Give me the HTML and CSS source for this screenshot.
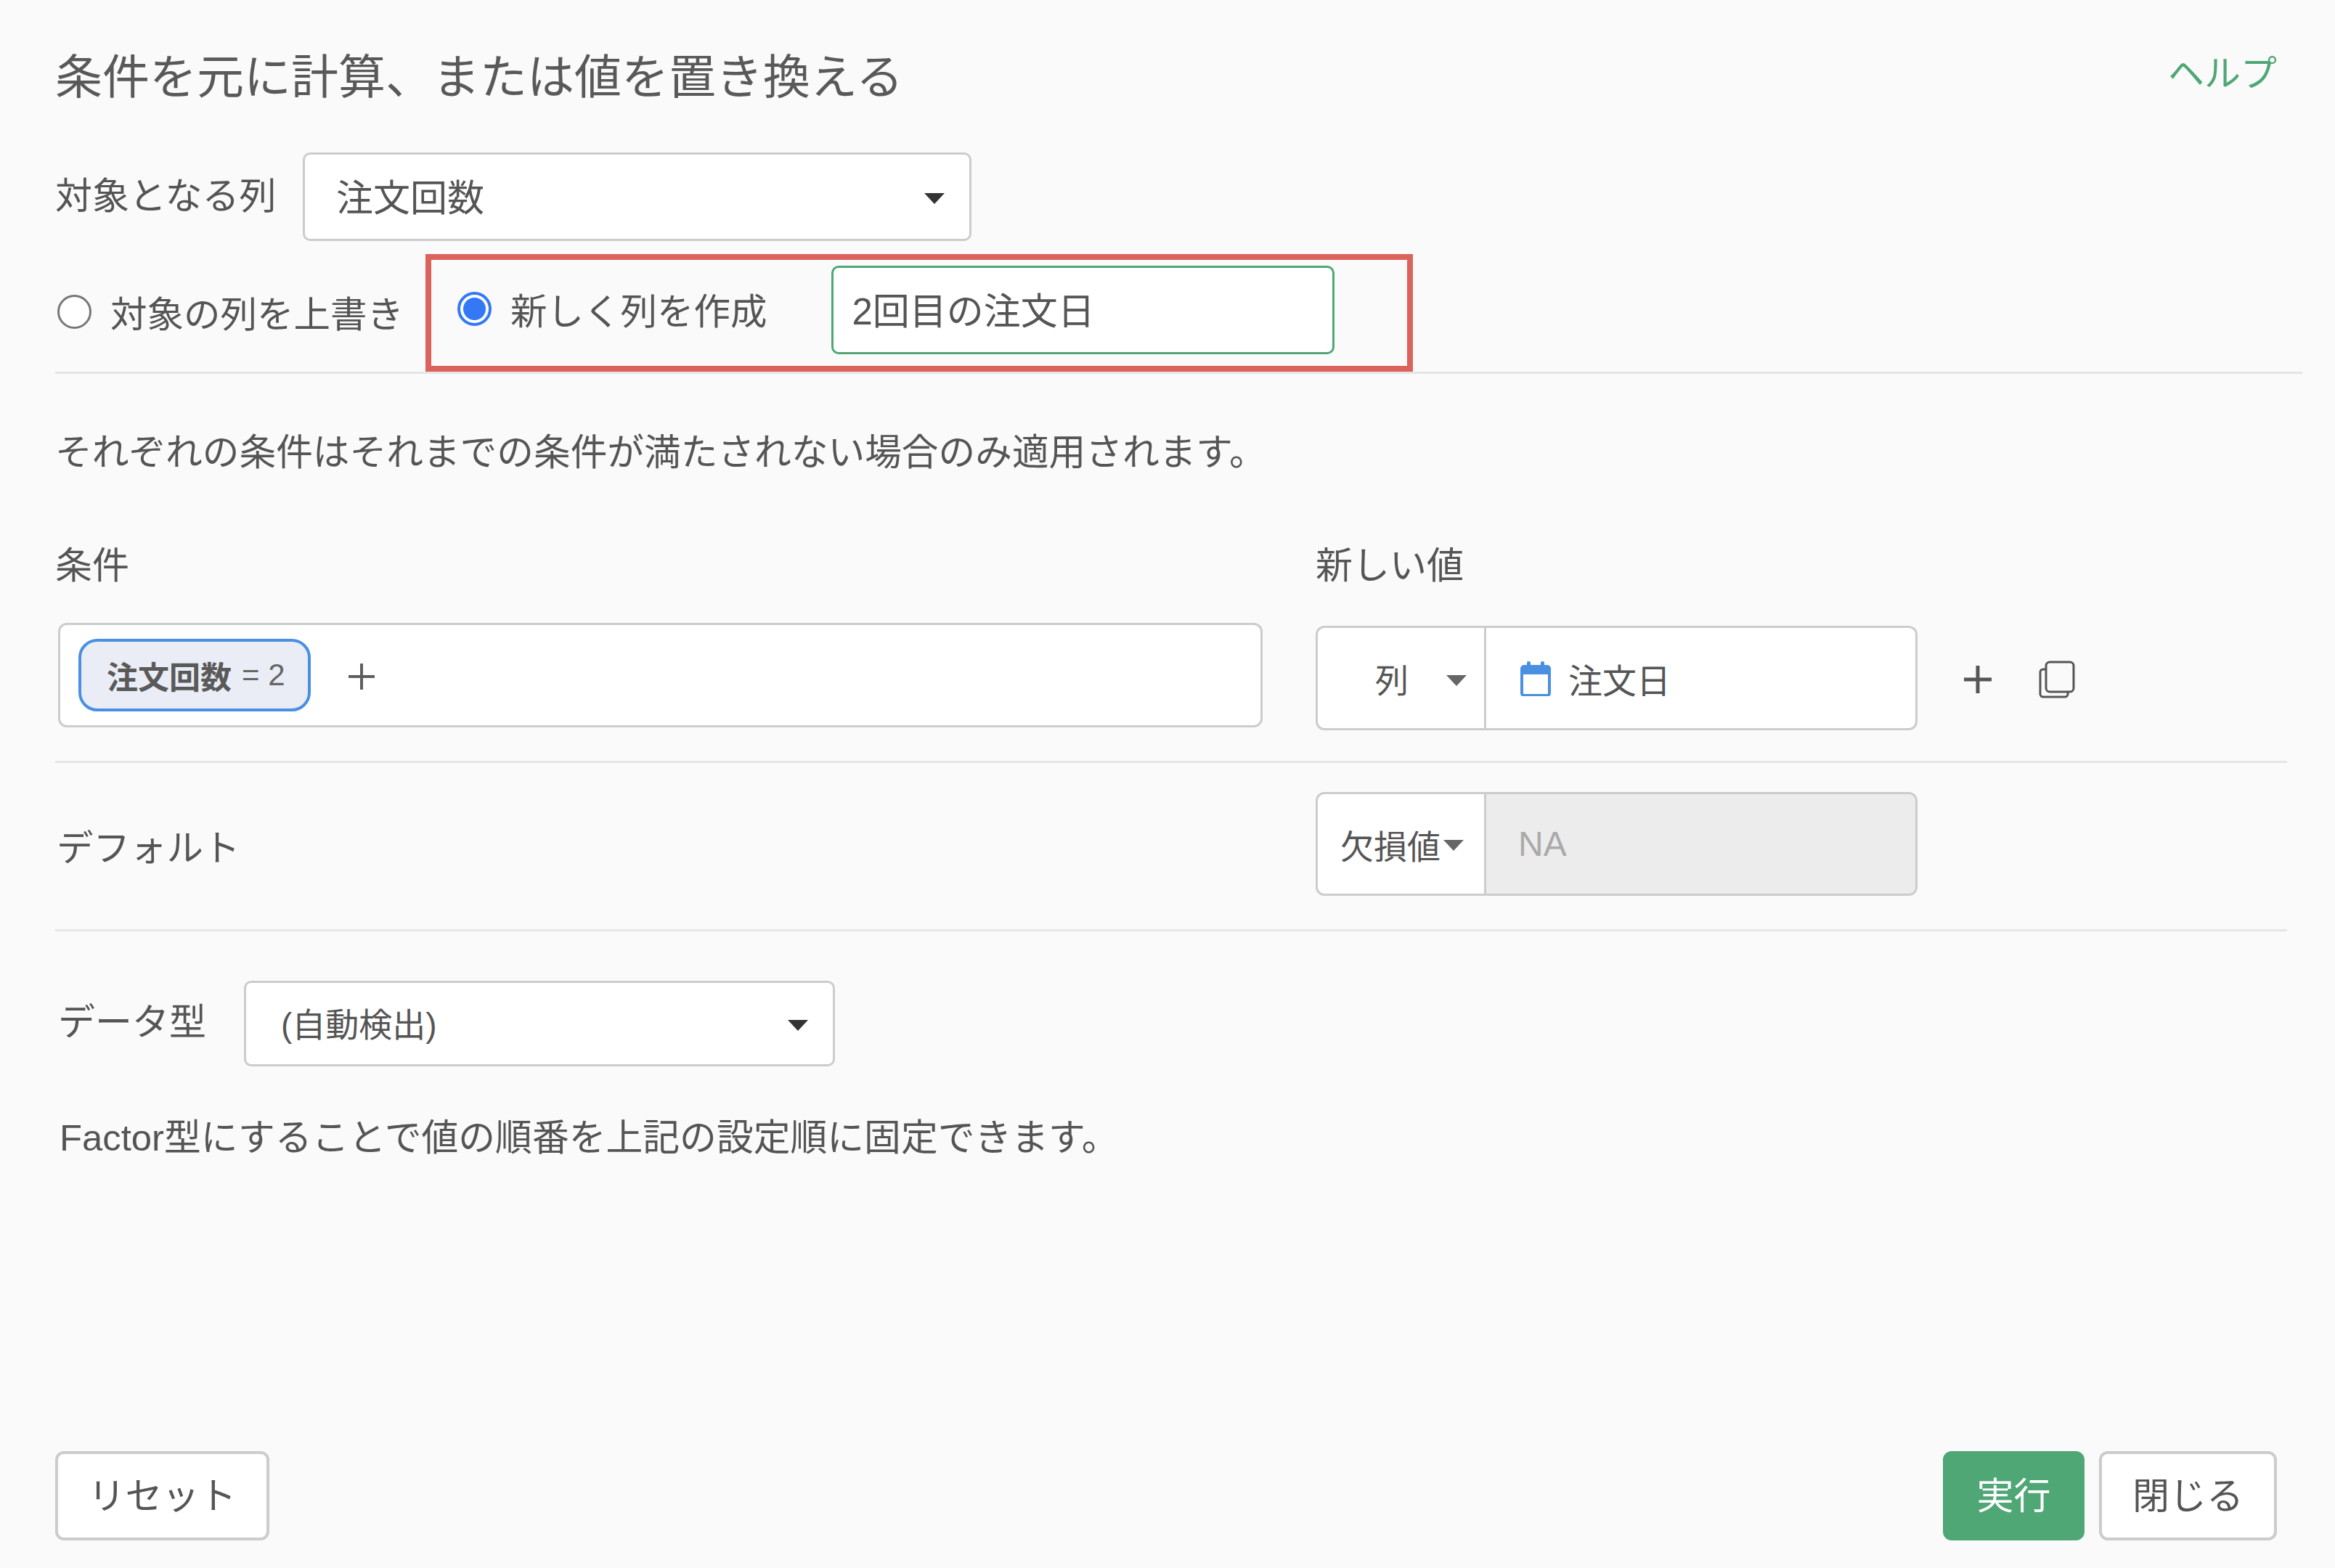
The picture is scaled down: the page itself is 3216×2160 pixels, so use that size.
FILE: index.html
```html
<!DOCTYPE html>
<html lang="ja">
<head>
<meta charset="utf-8">
<title>条件を元に計算、または値を置き換える</title>
<link rel="stylesheet" href="styles.css">
</head>
<body>
<div class="page">
  <header class="title-row">
    <h1 class="title">条件を元に計算、または値を置き換える</h1>
    <a class="help">ヘルプ</a>
  </header>

  <div class="target-row">
    <span class="label target-label">対象となる列</span>
    <div class="select select-target"><span class="select-text">注文回数</span><i class="caret caret-dark"></i></div>
  </div>

  <div class="mode-row">
    <label class="radio-item"><span class="radio"></span>対象の列を上書き</label>
    <div class="highlight">
      <label class="radio-item"><span class="radio radio-on"></span>新しく列を作成</label>
      <div class="name-input">2回目の注文日</div>
    </div>
  </div>
  <div class="rule rule-wide"></div>

  <p class="note note-first">それぞれの条件はそれまでの条件が満たされない場合のみ適用されます。</p>

  <div class="columns head-row">
    <span class="label">条件</span>
    <span class="label">新しい値</span>
  </div>

  <div class="columns cond-row">
    <div class="cond-box">
      <span class="chip"><b class="chip-name">注文回数</b><span class="chip-op">= 2</span></span>
      <svg class="chip-plus" width="36" height="36" viewBox="0 0 36 36"><path d="M18 0V36M0 18H36" stroke="#5f5f5f" stroke-width="4" fill="none"/></svg>
    </div>
    <div class="value-line">
      <div class="group">
        <div class="group-type type-col"><span>列</span><i class="caret"></i></div>
        <div class="group-value">
          <svg class="cal" width="42" height="48" viewBox="0 0 42 48">
            <rect x="2" y="7" width="38" height="40" rx="3" fill="#fff" stroke="#4a90e2" stroke-width="4"/>
            <rect x="2" y="7" width="38" height="11" fill="#4a90e2"/>
            <rect x="9" y="0" width="5" height="10" rx="2" fill="#4a90e2"/>
            <rect x="28" y="0" width="5" height="10" rx="2" fill="#4a90e2"/>
          </svg>
          <span>注文日</span>
        </div>
      </div>
      <svg class="add" width="40" height="40" viewBox="0 0 40 40"><path d="M20 1V39M1 20H39" stroke="#555" stroke-width="5" fill="none"/></svg>
      <svg class="copy" width="50" height="52" viewBox="0 0 50 52" fill="none" stroke="#555" stroke-width="3">
        <path d="M9 12H6a4 4 0 0 0-4 4V46a4 4 0 0 0 4 4H36a4 4 0 0 0 4-4V43"/>
        <rect x="10" y="2" width="38" height="41" rx="5"/>
      </svg>
    </div>
  </div>
  <div class="rule"></div>

  <div class="columns default-row">
    <span class="label default-label">デフォルト</span>
    <div class="group">
      <div class="group-type type-missing"><span>欠損値</span><i class="caret"></i></div>
      <div class="group-value group-disabled">NA</div>
    </div>
  </div>
  <div class="rule rule-third"></div>

  <div class="data-row">
    <span class="label data-label">データ型</span>
    <div class="select select-data"><span class="select-text">(自動検出)</span><i class="caret caret-dark"></i></div>
  </div>

  <p class="note note-factor">Factor型にすることで値の順番を上記の設定順に固定できます。</p>

  <footer class="footer">
    <button class="btn btn-reset">リセット</button>
    <div class="footer-right">
      <button class="btn btn-run">実行</button>
      <button class="btn btn-close">閉じる</button>
    </div>
  </footer>
</div>
</body>
</html>
```

FILE: styles.css
```css
* { box-sizing: border-box; }
html, body { margin: 0; padding: 0; }
body {
  background: #fafafa;
  color: #555;
  font-family: "Liberation Sans", "Noto Sans CJK JP", sans-serif;
  font-size: 51px;
}
.page {
  width: 3216px;
  height: 2160px;
  padding: 60px 0 38px 76px;
  display: flex;
  flex-direction: column;
  overflow: hidden;
}
.title-row {
  height: 90px;
  width: 3060px;
  display: flex;
  justify-content: space-between;
  align-items: center;
}
.title { margin: 0; padding-top: 4px; font-size: 65px; font-weight: 400; line-height: 90px; color: #595959; }
.help { color: #4fa776; font-size: 50px; margin-top: -16px; }
.label { line-height: 70px; white-space: nowrap; }

.target-row { margin-top: 60px; display: flex; align-items: center; height: 122px; }
.target-label { width: 341px; }
.select {
  height: 100%;
  background: #fff;
  border: 3px solid #ccc;
  border-radius: 10px;
  display: flex;
  align-items: center;
  justify-content: space-between;
  color: #555;
}
.select-text { margin-top: -5px; }
.select-target { width: 921px; padding: 0 34px 0 43px; }
.select-data { width: 814px; margin-left: -2px; padding: 0 34px 0 48px; font-size: 46px; }

.caret {
  display: block;
  width: 0; height: 0;
  border-left: 14px solid transparent;
  border-right: 14px solid transparent;
  border-top: 15px solid #666;
  margin-top: 4px;
}
.caret-dark { border-top-color: #333; }

.mode-row { margin-top: 18px; height: 162px; display: flex; align-items: stretch; padding-left: 3px; }
.radio-item { display: flex; align-items: center; gap: 26px; white-space: nowrap; padding-bottom: 4px; font-size: 50.5px; }
.radio {
  width: 47px; height: 47px;
  border-radius: 50%;
  border: 3px solid #777;
  background: #fff;
  display: block;
  flex: none;
}
.radio-on {
  border: 4px solid #3478f6;
  background: radial-gradient(circle, #3478f6 0 15px, #fff 16px);
}
.highlight {
  margin-left: 30px;
  width: 1360px;
  border: 8px solid #db635b;
  padding: 8px 0 16px 36px;
  display: flex;
  align-items: stretch;
}
.name-input {
  margin-left: 88px;
  width: 693px;
  background: #fff;
  border: 3px solid #4fa776;
  border-radius: 10px;
  display: flex;
  align-items: center;
  padding: 0 0 4px 26px;
}

.rule { height: 3px; width: 3074px; background: #e5e5e5; flex: none; }
.rule-wide { width: 3095px; margin-top: 0; }
.note { margin: 0; line-height: 70px; white-space: nowrap; }
.note-first { margin-top: 74px; margin-bottom: -2px; font-size: 50.7px; }
.note-factor { margin-top: 64px; margin-left: 6px; font-size: 50.8px; }

.columns { display: grid; grid-template-columns: 1736px 1fr; }
.head-row { margin-top: 88px; }
.cond-row { margin-top: 43px; height: 148px; margin-bottom: 42px; }
.cond-box {
  margin-left: 4px;
  width: 1659px;
  height: 144px;
  background: #fff;
  border: 3px solid #ccc;
  border-radius: 12px;
  display: flex;
  align-items: center;
  padding-left: 25px;
}
.chip {
  width: 320px;
  height: 100px;
  background: #eaedf6;
  border: 4px solid #4a90e2;
  border-radius: 26px;
  display: flex;
  align-items: center;
  padding-left: 35px;
  font-size: 43px;
  white-space: nowrap;
}
.chip-name { font-weight: 700; color: #5a5a5a; }
.chip-op { margin-left: 14px; font-size: 42px; color: #666; }
.chip-plus { margin: 4px 0 0 52px; }
.value-line { display: flex; align-items: center; padding-top: 4px; }
.group {
  width: 829px;
  height: 144px;
  display: flex;
  background: #fff;
  border: 3px solid #ccc;
  border-radius: 12px;
  overflow: hidden;
  flex: none;
}
.group-type {
  width: 232px;
  border-right: 3px solid #ccc;
  display: flex;
  align-items: center;
  font-size: 46px;
  flex: none;
}
.type-col { padding-left: 79px; gap: 52px; }
.type-col .caret { margin-top: 6px; }
.type-missing { padding-left: 31px; gap: 4px; }
.group-value {
  flex: 1;
  display: flex;
  align-items: center;
  gap: 24px;
  padding-left: 47px;
  font-size: 47px;
}
.cal { margin-top: 2px; }
.group-disabled { background: #ececec; color: #aaa; padding-left: 44px; font-size: 48px; }
.add { margin: 4px 0 0 63px; }
.copy { margin: 4px 0 0 64px; }

.default-row { margin-top: 40px; height: 143px; margin-bottom: 46px; }
.default-label { margin-left: 2px; align-self: center; padding-top: 12px; font-size: 50.5px; }
.default-row .group { height: 143px; }

.data-row { margin-top: 68px; height: 118px; display: flex; align-items: center; padding-left: 4px; }
.data-label { width: 258px; margin-top: -2px; }

.footer {
  margin-top: auto;
  width: 3060px;
  display: flex;
  justify-content: space-between;
}
.footer-right { display: flex; gap: 20px; }
.btn {
  height: 123px;
  font: inherit;
  color: #555;
  background: #fff;
  border: 4px solid #ccc;
  border-radius: 12px;
  padding: 0 0 8px;
}
.btn-reset { width: 295px; }
.btn-run { width: 195px; background: #4fa776; border-color: #4fa776; color: #fff; }
.btn-close { width: 245px; }
```
